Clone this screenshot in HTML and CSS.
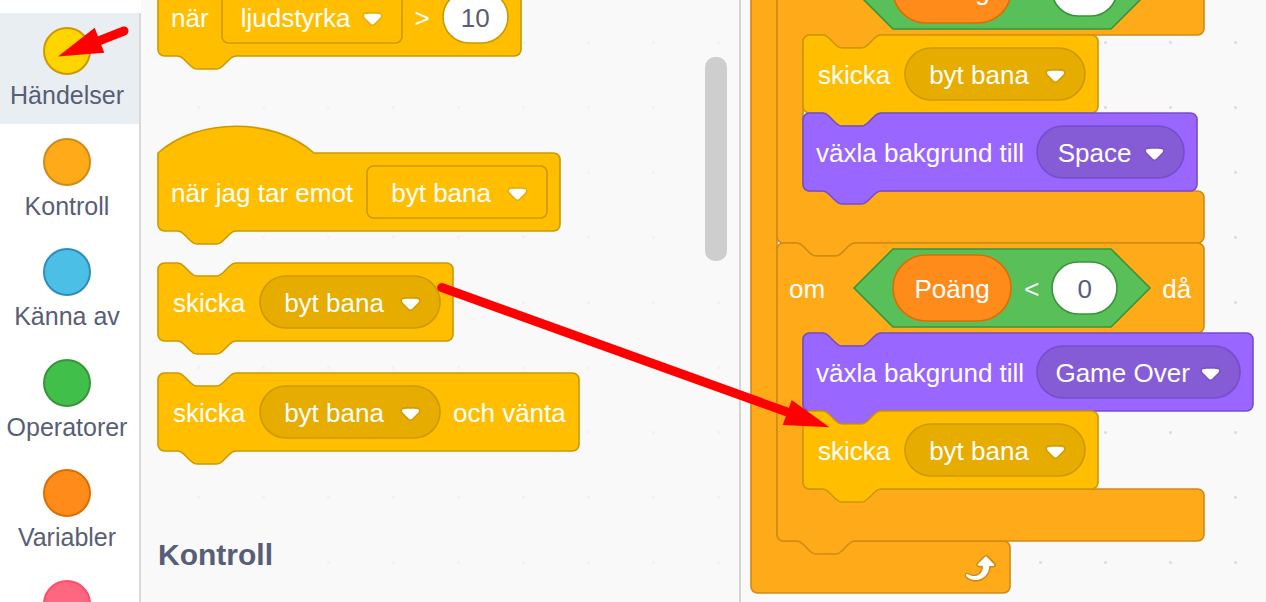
FILE: index.html
```html
<!DOCTYPE html>
<html lang="sv">
<head>
<meta charset="utf-8">
<title>Scratch</title>
<link rel="stylesheet" href="styles.css">
</head>
<body>
<svg class="symbols" aria-hidden="true">
  <symbol id="chevron" viewBox="0 0 12.71 8.79">
    <path fill="#231f20" opacity=".1" d="M12.71,2.44A2.41,2.41,0,0,1,12,4.16L8.08,8.08a2.45,2.45,0,0,1-3.45,0L0.72,4.16A2.42,2.42,0,0,1,0,2.44,2.48,2.48,0,0,1,.71.71C1,0.47,1.43,0,6.36,0S11.75,0.46,12,.71A2.44,2.44,0,0,1,12.71,2.44Z"/>
    <path fill="#fff" d="M6.36,7.79a1.43,1.43,0,0,1-1-.42L1.42,3.45a1.44,1.44,0,0,1,0-2c0.56-.56,9.31-0.56,9.87,0a1.44,1.44,0,0,1,0,2L7.37,7.37A1.43,1.43,0,0,1,6.36,7.79Z"/>
  </symbol>
</svg>

<main class="editor">
  <nav class="categories">
    <button class="category selected" type="button"><span class="bubble events-dot"></span>Händelser</button>
    <button class="category" type="button"><span class="bubble control-dot"></span>Kontroll</button>
    <button class="category" type="button"><span class="bubble sensing-dot"></span>Känna av</button>
    <button class="category" type="button"><span class="bubble operators-dot"></span>Operatorer</button>
    <button class="category" type="button"><span class="bubble variables-dot"></span>Variabler</button>
    <button class="category" type="button"><span class="bubble custom-dot"></span></button>
  </nav>

  <section class="palette">
    <div class="block row events loudness" data-shape="hat">
      <span class="label">när</span>
      <span class="field square" data-shape="square">
        <select class="w-180" aria-label="när"><option>ljudstyrka</option></select>
        <svg class="chevron"><use href="#chevron"/></svg>
      </span>
      <span class="label">&gt;</span>
      <span class="field number" data-shape="round"><input type="text" value="10" aria-label="ljudstyrka"></span>
    </div>

    <div class="block row events receive" data-shape="hat">
      <span class="label">när jag tar emot</span>
      <span class="field square" data-shape="square">
        <select class="w-180" aria-label="när jag tar emot"><option>byt bana</option></select>
        <svg class="chevron"><use href="#chevron"/></svg>
      </span>
    </div>

    <div class="block row events" data-shape="stack">
      <span class="label first">skicka</span>
      <span class="field" data-shape="round">
        <select class="w-180" aria-label="skicka"><option>byt bana</option></select>
        <svg class="chevron"><use href="#chevron"/></svg>
      </span>
    </div>

    <div class="block row events" data-shape="stack">
      <span class="label first">skicka</span>
      <span class="field" data-shape="round">
        <select class="w-180" aria-label="skicka och vänta"><option>byt bana</option></select>
        <svg class="chevron"><use href="#chevron"/></svg>
      </span>
      <span class="label">och vänta</span>
    </div>

    <h2 class="heading">Kontroll</h2>
    <div class="scrollbar"></div>
  </section>

  <section class="workspace">
    <div class="script">
      <div class="block control mouth forever" data-shape="loop">
        <div class="head"></div>
        <div class="body">

          <div class="block control mouth" data-shape="mouth">
            <div class="head condition">
              <span class="label om">om</span>
              <span class="operators hexagon" data-shape="hexagon">
                <span class="variable" data-shape="round"><span class="label">Poäng</span></span>
                <span class="label">&lt;</span>
                <span class="field number" data-shape="round"><input type="text" value="" aria-label="Poäng"></span>
              </span>
              <span class="label">då</span>
            </div>
            <div class="body">
              <div class="block row events" data-shape="stack">
                <span class="label first">skicka</span>
                <span class="field" data-shape="round">
                  <select class="w-180" aria-label="skicka"><option>byt bana</option></select>
                  <svg class="chevron"><use href="#chevron"/></svg>
                </span>
              </div>
              <div class="block row looks" data-shape="stack">
                <span class="label">växla bakgrund till</span>
                <span class="field" data-shape="round">
                  <select class="w-147" aria-label="växla bakgrund till"><option>Space</option></select>
                  <svg class="chevron"><use href="#chevron"/></svg>
                </span>
              </div>
            </div>
            <div class="foot"></div>
          </div>

          <div class="block control mouth" data-shape="mouth">
            <div class="head condition">
              <span class="label om">om</span>
              <span class="operators hexagon" data-shape="hexagon">
                <span class="variable" data-shape="round"><span class="label">Poäng</span></span>
                <span class="label">&lt;</span>
                <span class="field number" data-shape="round"><input type="text" value="0" aria-label="Poäng"></span>
              </span>
              <span class="label">då</span>
            </div>
            <div class="body">
              <div class="block row looks" data-shape="stack">
                <span class="label">växla bakgrund till</span>
                <span class="field" data-shape="round">
                  <select class="w-203" aria-label="växla bakgrund till"><option>Game Over</option></select>
                  <svg class="chevron"><use href="#chevron"/></svg>
                </span>
              </div>
              <div class="block row events" data-shape="stack">
                <span class="label first">skicka</span>
                <span class="field" data-shape="round">
                  <select class="w-180" aria-label="skicka"><option>byt bana</option></select>
                  <svg class="chevron"><use href="#chevron"/></svg>
                </span>
              </div>
            </div>
            <div class="foot"></div>
          </div>

        </div>
        <div class="foot">
          <svg class="repeat" viewBox="0 0 24 24">
            <path fill="#cf8b17" d="M23.3,11c-0.3,0.6-0.9,1-1.5,1h-1.6c-0.1,1.3-0.5,2.5-1.1,3.6c-0.9,1.7-2.3,3.2-4.1,4.1c-1.7,0.9-3.6,1.2-5.5,0.9c-1.8-0.3-3.5-1.1-4.9-2.3c-0.7-0.7-0.7-1.9,0-2.6c0.6-0.6,1.6-0.7,2.3-0.2H7c0.9,0.6,1.9,0.9,2.9,0.9s1.9-0.3,2.7-0.9c1.1-0.8,1.8-2.1,1.8-3.5h-1.5c-0.9,0-1.7-0.7-1.7-1.7c0-0.4,0.2-0.9,0.5-1.2l4.4-4.4c0.7-0.6,1.7-0.6,2.4,0L23,9.2C23.5,9.7,23.6,10.4,23.3,11z"/>
            <path fill="#fff" d="M21.8,11h-2.6c0,1.5-0.3,2.9-1,4.2c-0.8,1.6-2.1,2.8-3.7,3.6c-1.5,0.8-3.3,1.1-4.9,0.8c-1.6-0.2-3.2-1-4.4-2.1c-0.4-0.3-0.4-0.9-0.1-1.2c0.3-0.4,0.9-0.4,1.2-0.1l0,0c1,0.7,2.2,1.1,3.4,1.1s2.3-0.3,3.3-1c0.9-0.6,1.6-1.5,2-2.6c0.3-0.9,0.4-1.8,0.2-2.8h-2.4c-0.4,0-0.7-0.3-0.7-0.7c0-0.2,0.1-0.3,0.2-0.4l4.4-4.4c0.3-0.3,0.7-0.3,0.9,0L22,9.8c0.3,0.3,0.4,0.6,0.3,0.9S22,11,21.8,11z"/>
          </svg>
        </div>
      </div>
    </div>
  </section>
</main>

<svg class="arrows" aria-hidden="true">
  <line x1="124" y1="31" x2="96" y2="42"/>
  <polygon points="58,56.5 94.7,27.7 104.3,52.7"/>
  <line x1="441.7" y1="287.5" x2="790" y2="413"/>
  <polygon points="829.5,427.3 791.7,400 782.7,425"/>
</svg>
<script src="blocks.js"></script>
</body>
</html>
```

FILE: styles.css
```css
* {
  box-sizing: border-box;
}

body {
  margin: 0;
  overflow: hidden;
  background: #f9f9f9;
  color: #575e75;
  font-family: "Liberation Sans", Arial, sans-serif;
}

button,
input,
select {
  margin: 0;
  border: 0;
  background: transparent;
  color: inherit;
  font: inherit;
}

.symbols {
  display: none;
}

.editor {
  display: grid;
  grid-template-columns: 141px 600px 1fr;
  height: 100vh;
  overflow: hidden;
}

/* Categories */
.categories {
  display: grid;
  grid-template-rows: repeat(6, 1fr);
  min-height: 663px;
  margin-top: 13px;
  background: #fff;
  border-right: 2px solid #d9d9d9;
  box-shadow: 0 -13px #fff;
}

.category {
  display: flex;
  flex-direction: column;
  align-items: center;
  gap: 2px;
  padding: 14px 5px 0 0;
  font-size: 25px;
  line-height: 36px;
  white-space: nowrap;
}

.selected {
  background: #e9eef2;
}

.bubble {
  width: 48px;
  height: 48px;
  border: 2px solid;
  border-radius: 50%;
}

.events-dot { background: #ffd500; border-color: #cc9900; }
.control-dot { background: #ffab19; border-color: #cf8b17; }
.sensing-dot { background: #4cbfe6; border-color: #2e8eb8; }
.operators-dot { background: #40bf4a; border-color: #389438; }
.variables-dot { background: #ff8c1a; border-color: #db6e00; }
.custom-dot { background: #ff6680; border-color: #ff4d6a; }

/* Palette */
.palette {
  position: relative;
  display: flex;
  flex-direction: column;
  align-items: flex-start;
  gap: 32px;
  padding-left: 17px;
  overflow: hidden;
  border-right: 2px solid #d4d4d4;
  background: radial-gradient(circle, #f1f1f1 1px, #f9f9f9 2px) 25px 10px / 65px 65px;
}

.loudness {
  margin-top: -22px;
}

.palette .receive {
  gap: 14px;
  margin-top: 65px;
}

.heading {
  margin: 54px 0 0;
  font-size: 30px;
  line-height: 36px;
}

.scrollbar {
  position: absolute;
  top: 57px;
  right: 12px;
  width: 22px;
  height: 204px;
  border-radius: 10px;
  background: #cecece;
}

/* Workspace */
.workspace {
  position: relative;
  overflow: hidden;
  background: radial-gradient(circle, #ddd 1px, #f9f9f9 2px) 7px 10px / 65px 65px;
}

.script {
  position: absolute;
  top: -133px;
  left: 10px;
}

/* Blocks */
.block,
.field,
.variable,
.hexagon {
  position: relative;
}

.outline {
  position: absolute;
  inset: 0;
  width: 100%;
  height: 100%;
  overflow: visible;
  fill: var(--fill);
  stroke: var(--edge);
}

.events { --fill: #ffbf00; --edge: #cc9900; --dark: #e6ac00; }
.control { --fill: #ffab19; --edge: #cf8b17; }
.looks { --fill: #9966ff; --edge: #774dcb; --dark: #855cd6; }
.operators { --fill: #59c059; --edge: #389438; }
.variable { --fill: #ff8c1a; --edge: #db6e00; }

.row {
  display: flex;
  align-items: center;
  gap: 13px;
  width: max-content;
  height: 78px;
  padding: 0 13px;
}

.label {
  position: relative;
  padding-top: 2px;
  color: #fff;
  font-size: 26px;
  line-height: 30px;
  text-align: center;
  white-space: nowrap;
}

.first {
  min-width: 76px;
}

.field {
  display: flex;
  height: 52px;
}

.field > .outline {
  fill: var(--dark);
}

.square > .outline {
  fill: var(--fill);
}

.number > .outline {
  fill: #fff;
}

.field select,
.field input {
  position: relative;
  height: 52px;
  font-size: 26px;
}

.field select {
  appearance: none;
  padding: 2px 48px 0 16px;
  color: #fff;
  text-align-last: center;
}

.field input {
  width: 65px;
  padding: 2px 0 0;
  text-align: center;
}

.w-147 { width: 147px; }
.w-180 { width: 180px; }
.w-203 { width: 203px; }

.chevron {
  position: absolute;
  top: 21px;
  right: 19px;
  width: 21px;
  height: 14px;
  pointer-events: none;
}

.body {
  margin-left: 26px;
}

.head {
  width: max-content;
}

.foot {
  height: 52px;
}

.forever > .head,
.forever > .foot {
  width: 259px;
  height: 78px;
}

.forever > .foot {
  position: relative;
  display: flex;
  align-items: center;
  justify-content: flex-end;
  height: 52px;
  padding-right: 13px;
}

.condition {
  display: flex;
  align-items: center;
  gap: 12px;
  height: 90px;
  padding: 0 13px 0 12px;
}

.om {
  margin-right: 17px;
}

.hexagon {
  display: flex;
  align-items: center;
  gap: 13px;
  height: 78px;
  padding: 0 33px 0 39px;
}

.variable {
  display: flex;
  align-items: center;
  justify-content: center;
  width: 118px;
  height: 66px;
}

.repeat {
  width: 39px;
  height: 39px;
}

/* Annotations */
.arrows {
  position: absolute;
  inset: 0;
  width: 100%;
  height: 100%;
  pointer-events: none;
  fill: #f00;
}

.arrows line {
  stroke: #f00;
  stroke-width: 9px;
  stroke-linecap: round;
}
```

FILE: blocks.js
```js
// Draws the outline behind every block and field, sized to its content.
const SCALE = 1.625;
const NOTCH = 'c 2,0 3,1 4,2 l 4,4 c 1,1 2,2 4,2 h 12 c 2,0 3,-1 4,-2 l 4,-4 c 1,-1 2,-2 4,-2';
const NOTCH_BACK = 'c -2,0 -3,1 -4,2 l -4,4 c -1,1 -2,2 -4,2 h -12 c -2,0 -3,-1 -4,-2 l -4,-4 c -1,-1 -2,-2 -4,-2';
const TOP = `M 0,4 a 4,4 0 0 1 4,-4 H 12 ${NOTCH}`;
const END = 'H 4 a 4,4 0 0 1 -4,-4 Z';

function side(w, top, bottom) {
  return `H ${w - 4} a 4,4 0 0 1 4,4 V ${bottom - 4} a 4,4 0 0 1 -4,4`;
}

function mouth(el, notched) {
  const head = el.querySelector(':scope > .head');
  const foot = el.querySelector(':scope > .foot');
  const w = head.offsetWidth / SCALE;
  const h = el.offsetHeight / SCALE;
  const a = head.offsetHeight / SCALE;
  const b = h - foot.offsetHeight / SCALE;
  return `${TOP} ${side(w, 0, a)} H 64 ${NOTCH_BACK} H 20 a 4,4 0 0 0 -4,4 V ${b - 4} a 4,4 0 0 0 4,4 `
    + `${side(w, b, h)} ${notched ? 'H 48 ' + NOTCH_BACK : ''} ${END}`;
}

const shapes = {
  stack: (w, h) => `${TOP} ${side(w, 0, h)} H 48 ${NOTCH_BACK} ${END}`,
  hat: (w, h) => `M 0,0 c 25,-22 71,-22 96,0 ${side(w, 0, h)} H 48 ${NOTCH_BACK} ${END}`,
  square: (w, h) => `M 0,4 a 4,4 0 0 1 4,-4 ${side(w, 0, h)} ${END}`,
  round: (w, h) => `M ${h / 2},0 H ${w - h / 2} a ${h / 2},${h / 2} 0 0 1 0,${h} H ${h / 2} a ${h / 2},${h / 2} 0 0 1 0,${-h} Z`,
  hexagon: (w, h) => `M ${h / 2},0 H ${w - h / 2} L ${w},${h / 2} L ${w - h / 2},${h} H ${h / 2} L 0,${h / 2} Z`,
  mouth: (w, h, el) => mouth(el, true),
  loop: (w, h, el) => mouth(el, false)
};

document.querySelectorAll('[data-shape]').forEach((el) => {
  const ns = 'http://www.w3.org/2000/svg';
  const svg = document.createElementNS(ns, 'svg');
  const path = document.createElementNS(ns, 'path');
  svg.setAttribute('class', 'outline');
  path.setAttribute('transform', `scale(${SCALE})`);
  path.setAttribute('d', shapes[el.dataset.shape](el.offsetWidth / SCALE, el.offsetHeight / SCALE, el));
  svg.append(path);
  el.prepend(svg);
});
```
